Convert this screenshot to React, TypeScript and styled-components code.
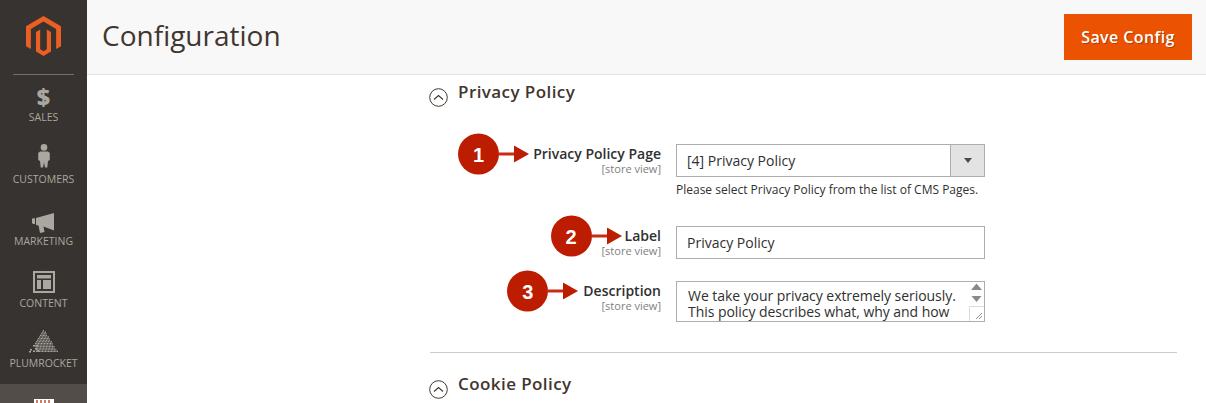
import styled, {createGlobalStyle} from "styled-components";

const GlobalStyle = createGlobalStyle`
    html, body {
        margin: 0;
        padding: 0;
        background: #fff;
        font-family: "Open Sans", "Liberation Sans", sans-serif;
    }
`;

const ACCENT = "#bc1c00";
const NAV_COLOR = "#aaa6a0";

const Styled = {
    Page: styled.div`
        display: flex;
        width: 1206px;
        height: 403px;
        overflow: hidden;
    `,
    Sidebar: styled.nav`
        flex: 0 0 87px;
        display: flex;
        flex-direction: column;
        background: #373330;
        overflow: hidden;
    `,
    Logo: styled.div`
        flex: none;
        display: flex;
        justify-content: center;
        height: 58px;
        padding-top: 16px;
    `,
    Divider: styled.div`
        flex: none;
        height: 1px;
        margin: 0 13px;
        background: #736e6a;
    `,
    NavItem: styled.div<{ $height: number }>`
        flex: none;
        display: flex;
        flex-direction: column;
        align-items: center;
        height: ${p => p.$height}px;
        color: ${NAV_COLOR};
    `,
    NavIcon: styled.div<{ $gap: number }>`
        box-sizing: border-box;
        display: flex;
        justify-content: center;
        align-items: flex-end;
        height: 35px;
        padding-bottom: ${p => p.$gap}px;
    `,
    NavGlyph: styled.span`
        display: block;
        height: 20px;
        font-family: "Open Sans", sans-serif;
        font-size: 23px;
        font-weight: 800;
        line-height: 20px;
    `,
    NavLabel: styled.div`
        font-size: 10.5px;
        line-height: 14px;
        white-space: nowrap;
    `,
    ActiveItem: styled.div`
        flex: 1 1 0;
        min-height: 0;
        display: flex;
        justify-content: center;
        align-items: flex-start;
        padding-top: 15px;
        background: #524d49;
    `,
    Main: styled.div`
        flex: 1;
        display: flex;
        flex-direction: column;
        min-width: 0;
    `,
    Header: styled.header`
        flex: 0 0 75px;
        box-sizing: border-box;
        display: flex;
        justify-content: space-between;
        padding: 14px 14px 0 15px;
        background: #f8f8f8;
        border-bottom: 1px solid #e3e3e3;
    `,
    Title: styled.h1`
        margin: 0;
        font-size: 28px;
        font-weight: 400;
        line-height: 42px;
        color: #41362f;
    `,
    SaveButton: styled.button`
        width: 128px;
        height: 46px;
        border: 0;
        padding: 0;
        background: #eb5202;
        color: #fff;
        font-family: inherit;
        font-size: 16px;
        font-weight: 600;
        letter-spacing: 0.025em;
        text-shadow: 1px 1px 0 rgba(0, 0, 0, 0.25);
    `,
    Content: styled.div`
        flex: 1;
        padding: 0 29px 0 343px;
    `,
    SectionTitle: styled.div`
        display: flex;
        align-items: flex-start;
        gap: 10px;
        margin: 6px 0 0 -1px;
        height: 32px;
        font-size: 17px;
        font-weight: 600;
        letter-spacing: 0.025em;
        line-height: 22px;
        color: #41362f;
    `,
    SectionIcon: styled.svg`
        flex: none;
        margin-top: 7px;
    `,
    Form: styled.div`
        padding-top: 31px;
    `,
    Row: styled.div`
        display: flex;
        gap: 15px;
        margin-bottom: 22px;
    `,
    LabelCell: styled.div`
        flex: 0 0 231px;
        display: flex;
        flex-direction: column;
        align-items: flex-end;
        padding-top: 1px;
    `,
    LabelText: styled.div`
        position: relative;
        font-size: 14px;
        font-weight: 600;
        line-height: 18px;
        color: #303030;
        white-space: nowrap;
    `,
    Scope: styled.div`
        font-size: 11px;
        line-height: 11px;
        color: #808080;
        white-space: nowrap;
    `,
    Callout: styled.div<{ $gap: number }>`
        position: absolute;
        right: 100%;
        top: 50%;
        transform: translateY(-50%);
        margin-right: ${p => p.$gap}px;
        display: flex;
        align-items: center;
    `,
    Badge: styled.div`
        width: 41px;
        height: 41px;
        border-radius: 50%;
        background: ${ACCENT};
        color: #fff;
        display: flex;
        align-items: center;
        justify-content: center;
        font-family: "Liberation Sans", Arial, sans-serif;
        font-size: 20px;
        font-weight: 700;
    `,
    ControlCell: styled.div`
        flex: 0 0 309px;
    `,
    SelectBox: styled.div`
        box-sizing: border-box;
        display: flex;
        height: 33px;
        border: 1px solid #adadad;
    `,
    SelectValue: styled.div`
        flex: 1;
        padding-left: 10px;
        font-size: 14px;
        line-height: 31px;
        color: #303030;
    `,
    SelectArrow: styled.div`
        flex: 0 0 33px;
        display: flex;
        align-items: center;
        justify-content: center;
        background: #e3e3e3;
        border-left: 1px solid #adadad;
        &::after {
            content: "";
            border-style: solid;
            border-width: 5px 4.5px 0;
            border-color: #514943 transparent transparent;
        }
    `,
    Hint: styled.div`
        height: 27px;
        padding-top: 5px;
        box-sizing: border-box;
        font-size: 12px;
        line-height: 16px;
        color: #303030;
        white-space: nowrap;
    `,
    Input: styled.div`
        box-sizing: border-box;
        height: 33px;
        padding-left: 10px;
        border: 1px solid #adadad;
        font-size: 14px;
        line-height: 31px;
        color: #303030;
    `,
    TextArea: styled.div`
        position: relative;
        box-sizing: border-box;
        height: 41px;
        padding: 6px 0 0 11px;
        overflow: hidden;
        border: 1px solid #adadad;
        font-size: 14px;
        letter-spacing: -0.05px;
        line-height: 16px;
        color: #303030;
        white-space: nowrap;
    `,
    ScrollBar: styled.svg`
        position: absolute;
        top: 0;
        right: 0;
        background: #fff;
    `,
    Separator: styled.div`
        height: 1px;
        margin: 30px 0 20px;
        background: #cccccc;
    `,
};

const SectionIcon = () => (
    <Styled.SectionIcon width="19" height="19" viewBox="0 0 19 19" fill="none">
        <circle cx="9.5" cy="9.5" r="8.8" stroke="#41362f" strokeWidth="1"/>
        <path d="M5 11.5 9.5 7.5 14 11.5" stroke="#41362f" strokeWidth="1.1"/>
    </Styled.SectionIcon>
);

const Arrow = () => (
    <svg width="30" height="17" viewBox="0 0 30 17">
        <rect x="0" y="7" width="16" height="3" fill="#cc2a12"/>
        <path d="M15 0 30 8.500 15 17Z" fill={ACCENT}/>
    </svg>
);

const MagentoLogo = () => (
    <svg width="35" height="40" viewBox="0 0 36 41">
        <path fill="#eb5f22" d="M18 0 0 10.4V31l5 2.9V13.2L18 5.7l13 7.5v20.7l5-2.9V10.4Z"/>
        <path fill="#eb5f22" d="M18 41 10.3 36.5V16.4l4.3-2.5v20.2l3.4 2 3.4-2V13.9l4.3 2.5v20.1Z"/>
    </svg>
);

const CustomerIcon = () => (
    <svg width="12" height="24" viewBox="0 0 12 24" fill={NAV_COLOR}>
        <circle cx="6" cy="3.4" r="3.3"/>
        <path d="M2 7.500h8l1.800 1.500V16l-1.800 1-.7 6.500H7L6 18.500 5 23.500H2.700L2 17 .2 16V9Z"/>
    </svg>
);

const MegaphoneIcon = () => (
    <svg width="23" height="20" viewBox="0 0 23 20" fill={NAV_COLOR}>
        <path d="M0 5.500 3 5.200V11H1.200L0 10Z"/>
        <path d="M4 5 22 0V17.500L11.500 13.500 12.500 19 8 20 6.500 12.500 4 12Z"/>
    </svg>
);

const ContentIcon = () => (
    <svg width="22" height="22" viewBox="0 0 22 22">
        <rect x="1" y="1" width="20" height="20" fill="none" stroke={NAV_COLOR} strokeWidth="2"/>
        <rect x="4" y="4" width="14" height="3.500" fill={NAV_COLOR}/>
        <rect x="4" y="9" width="4" height="9" fill={NAV_COLOR}/>
        <rect x="10" y="9" width="8" height="9" fill={NAV_COLOR}/>
    </svg>
);

const PyramidIcon = () => {
    // dotted pyramid, scatters away on the lower left side
    const dots: { x: number; y: number }[] = [];
    for (let row = 0; row < 14; row++) {
        const y = row * 1.6;
        const half = (y + 1) * 0.62;
        const left = row > 8 ? -half + (row - 8) * 1.2 : -half;
        for (let x = left; x <= half; x += 1.5) {
            dots.push({x: 14.5 + x, y});
        }
    }
    return (
        <svg width="29" height="23" viewBox="0 0 29 23" fill={NAV_COLOR}>
            {dots.map((d, i) => <rect key={i} x={d.x} y={d.y} width="1.1" height="1.2"/>)}
            <rect x="4" y="15" width="2" height="1.500"/>
            <rect x="1" y="19" width="2" height="1.500"/>
            <rect x="0" y="21" width="2" height="1.500"/>
            <rect x="6" y="18" width="2" height="1.500"/>
            <rect x="4" y="20.500" width="2" height="1.500"/>
            <rect x="8" y="20" width="2" height="1.500"/>
            <rect x="7" y="15" width="2" height="1.500"/>
        </svg>
    );
};

const StoresIcon = () => (
    <svg width="20" height="6" viewBox="0 0 20 6">
        <rect width="20" height="6" fill="#fff"/>
        <path d="M3 1V6M7 1V6M11 1V6M15 1V6" stroke="#b5543a" strokeWidth="1.500"/>
    </svg>
);

const ScrollBar = () => (
    <Styled.ScrollBar width="15" height="39" viewBox="0 0 15 39">
        <path d="M7.500 1.500 13 8H2Z" fill="#8a8a8a"/>
        <path d="M2.500 14H12.500L7.500 20Z" fill="#8a8a8a"/>
        <path d="M.5 39V24.500H15" fill="none" stroke="#dcdcdc"/>
        <path d="M13 31 7 37M13 34 10 37" stroke="#777" strokeWidth="0.8"/>
    </Styled.ScrollBar>
);

const Label = ({step, text, gap}: { step: number; text: string; gap: number }) => (
    <Styled.LabelCell>
        <Styled.LabelText>
            <Styled.Callout $gap={gap}><Styled.Badge>{step}</Styled.Badge><Arrow/></Styled.Callout>
            {text}
        </Styled.LabelText>
        <Styled.Scope>[store view]</Styled.Scope>
    </Styled.LabelCell>
);

const App = () => (
    <>
        <GlobalStyle/>
        <Styled.Page>
            <Styled.Sidebar>
                <Styled.Logo><MagentoLogo/></Styled.Logo>
                <Styled.Divider/>
                <Styled.NavItem $height={62}>
                    <Styled.NavIcon $gap={3}><Styled.NavGlyph>$</Styled.NavGlyph></Styled.NavIcon>
                    <Styled.NavLabel>SALES</Styled.NavLabel>
                </Styled.NavItem>
                <Styled.NavItem $height={62}>
                    <Styled.NavIcon $gap={4}><CustomerIcon/></Styled.NavIcon>
                    <Styled.NavLabel>CUSTOMERS</Styled.NavLabel>
                </Styled.NavItem>
                <Styled.NavItem $height={62}>
                    <Styled.NavIcon $gap={1}><MegaphoneIcon/></Styled.NavIcon>
                    <Styled.NavLabel>MARKETING</Styled.NavLabel>
                </Styled.NavItem>
                <Styled.NavItem $height={60}>
                    <Styled.NavIcon $gap={3}><ContentIcon/></Styled.NavIcon>
                    <Styled.NavLabel>CONTENT</Styled.NavLabel>
                </Styled.NavItem>
                <Styled.NavItem $height={63}>
                    <Styled.NavIcon $gap={3}><PyramidIcon/></Styled.NavIcon>
                    <Styled.NavLabel>PLUMROCKET</Styled.NavLabel>
                </Styled.NavItem>
                <Styled.ActiveItem><StoresIcon/></Styled.ActiveItem>
            </Styled.Sidebar>
            <Styled.Main>
                <Styled.Header>
                    <Styled.Title>Configuration</Styled.Title>
                    <Styled.SaveButton>Save Config</Styled.SaveButton>
                </Styled.Header>
                <Styled.Content>
                    <Styled.SectionTitle>
                        <SectionIcon/>
                        <span>Privacy Policy</span>
                    </Styled.SectionTitle>
                    <Styled.Form>
                        <Styled.Row>
                            <Label step={1} text="Privacy Policy Page" gap={4}/>
                            <Styled.ControlCell>
                                <Styled.SelectBox>
                                    <Styled.SelectValue>[4] Privacy Policy</Styled.SelectValue>
                                    <Styled.SelectArrow/>
                                </Styled.SelectBox>
                                <Styled.Hint>Please select Privacy Policy from the list of CMS Pages.</Styled.Hint>
                            </Styled.ControlCell>
                        </Styled.Row>
                        <Styled.Row>
                            <Label step={2} text="Label" gap={3}/>
                            <Styled.ControlCell>
                                <Styled.Input>Privacy Policy</Styled.Input>
                            </Styled.ControlCell>
                        </Styled.Row>
                        <Styled.Row>
                            <Label step={3} text="Description" gap={5}/>
                            <Styled.ControlCell>
                                <Styled.TextArea>
                                    We take your privacy extremely seriously.<br/>
                                    This policy describes what, why and how
                                    <ScrollBar/>
                                </Styled.TextArea>
                            </Styled.ControlCell>
                        </Styled.Row>
                    </Styled.Form>
                    <Styled.Separator/>
                    <Styled.SectionTitle>
                        <SectionIcon/>
                        <span>Cookie Policy</span>
                    </Styled.SectionTitle>
                </Styled.Content>
            </Styled.Main>
        </Styled.Page>
    </>
);

export default App;
